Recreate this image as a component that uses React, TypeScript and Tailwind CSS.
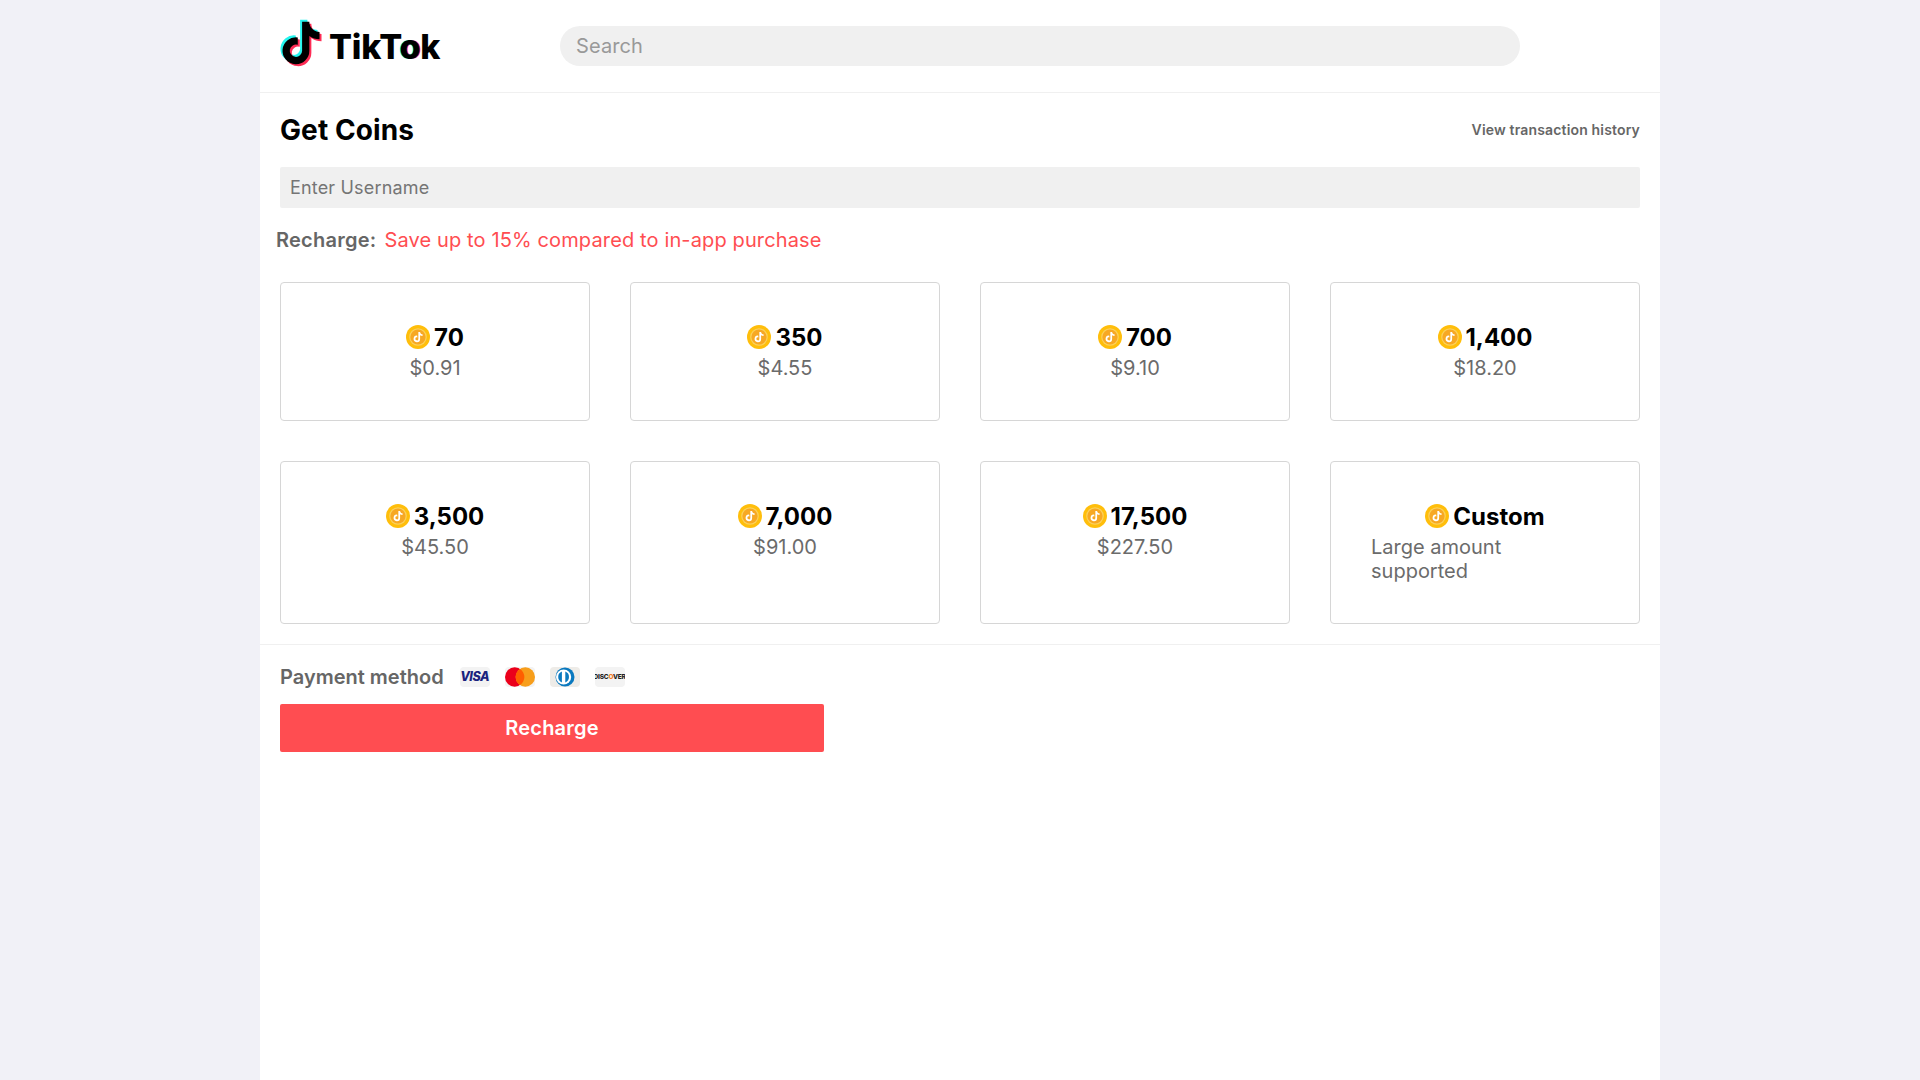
import React from 'react';

const NOTE =
  'M448,209.91a210.06,210.06,0,0,1-122.77-39.25V349.38A162.55,162.55,0,1,1,185,188.31V278.2a74.62,74.62,0,1,0,52.23,71.18V0l88,0a121.18,121.18,0,0,0,1.86,22.17h0A122.18,122.18,0,0,0,381,102.39a121.43,121.43,0,0,0,67,20.14Z';

const LogoMark = () => (
  <svg viewBox="-30 -30 508 572" className="w-[42px] h-[48px] shrink-0 -mt-[7px]">
    <path d={NOTE} fill="#25F4EE" transform="translate(-24 -24)" />
    <path d={NOTE} fill="#FE2C55" transform="translate(24 24)" />
    <path d={NOTE} fill="#000000" />
  </svg>
);

const Coin = () => (
  <svg viewBox="0 0 24 24" className="w-6 h-6 shrink-0 -mt-[2px]">
    <circle cx="12" cy="12" r="12" fill="#FFBE0B" />
    <circle cx="12" cy="12" r="8.8" fill="#FBD05A" />
    <circle cx="12" cy="12" r="7.6" fill="#F7A823" />
    <g transform="translate(7.6 6.9) scale(0.02)">
      <path d={NOTE} fill="#FFFFFF" />
    </g>
  </svg>
);

const VisaIcon = () => (
  <div className="w-[30px] h-5 rounded-sm bg-[#f3f3f3] flex items-center justify-center overflow-hidden">
    <span className="text-[12.5px] leading-none font-extrabold italic text-[#1a237e] tracking-[-0.5px]">VISA</span>
  </div>
);

const MastercardIcon = () => (
  <div className="w-[30px] h-5 rounded-sm bg-[#f3f3f3]">
    <svg viewBox="0 0 30 20" className="w-[30px] h-5">
      <circle cx="9.7" cy="10" r="9.7" fill="#EB001B" />
      <circle cx="20.3" cy="10" r="9.7" fill="#F79E1B" />
      <path d="M15 1.9a9.7 9.7 0 0 1 0 16.2a9.7 9.7 0 0 1 0-16.2Z" fill="#FF5F00" />
    </svg>
  </div>
);

const DinersIcon = () => (
  <div className="w-[30px] h-5 rounded-sm bg-[#eeece8]">
    <svg viewBox="0 0 30 20" className="w-[30px] h-5">
      <circle cx="15" cy="10" r="9.5" fill="#0A79BF" />
      <circle cx="13.6" cy="10" r="7.6" fill="#FFFFFF" />
      <path d="M11.9 4.6v10.8a5.8 5.8 0 0 1 0-10.8ZM15.3 4.6v10.8a5.8 5.8 0 0 0 0-10.8Z" fill="#0A79BF" />
    </svg>
  </div>
);

const DiscoverIcon = () => (
  <div className="w-[30px] h-5 rounded-sm bg-[#f3f3f3] flex items-center justify-center overflow-hidden">
    <span className="text-[6.5px] leading-none font-extrabold text-[#222] tracking-[-0.2px]">
      DISC<span className="text-[#F47B20]">O</span>VER
    </span>
  </div>
);

const CoinCard: React.FC<{ amount: string; price: string; left?: boolean }> = ({ amount, price, left }) => (
  <div className="border border-[#d6d6d6] rounded-[4px] px-10 pt-10 pb-10 cursor-pointer">
    <div className="flex items-center justify-center gap-1 h-[30px]">
      <Coin />
      <span className="text-2xl leading-[30px] font-bold text-black">{amount}</span>
    </div>
    <p className={`mt-[3px] text-xl leading-6 text-[#6b6b6b] ${left ? 'text-left' : 'text-center'}`}>{price}</p>
  </div>
);

const App: React.FC = () => {
  const packages = [
    { amount: '70', price: '$0.91' },
    { amount: '350', price: '$4.55' },
    { amount: '700', price: '$9.10' },
    { amount: '1,400', price: '$18.20' },
    { amount: '3,500', price: '$45.50' },
    { amount: '7,000', price: '$91.00' },
    { amount: '17,500', price: '$227.50' },
    { amount: 'Custom', price: 'Large amount supported', left: true },
  ];

  return (
    <div className="min-h-screen bg-[#f1f1f7] [font-family:Inter,sans-serif]">
      <div className="w-[1400px] min-h-screen mx-auto bg-white">
        {/* Header */}
        <header className="flex items-center h-[93px] px-5 border-b border-[#f0f0f0]">
          <div className="w-[280px] flex items-center gap-[7px]">
            <LogoMark />
            <span className="text-[34px] leading-none font-extrabold tracking-[-0.2px] text-black mt-[2px]">
              Tik<span>T</span>
              <span className="[text-shadow:-1px_0_0_#25F4EE,1px_0_0_#FE2C55]">o</span>k
            </span>
          </div>
          <input
            placeholder="Search"
            className="w-[960px] h-10 rounded-[20px] bg-[#f0f0f0] px-4 text-xl tracking-[0.1px] outline-none placeholder:text-[#999999]"
          />
        </header>

        {/* Get coins */}
        <section className="px-5 pt-5 pb-5 border-b border-[#f0f0f0]">
          <div className="flex items-center justify-between">
            <h1 className="text-[28px] leading-[34px] font-bold text-black tracking-[0.1px]">Get Coins</h1>
            <a className="text-sm font-semibold text-[#666666] tracking-[0.16px]">View transaction history</a>
          </div>
          <input
            placeholder="Enter Username"
            className="mt-5 block w-full h-[41px] rounded-[2px] bg-[#f0f0f0] px-[10px] text-lg tracking-[0.17px] outline-none placeholder:text-[#757575]"
          />
          <p className="mt-5 -ml-1 text-xl leading-6 tracking-[0.13px]">
            <span className="font-semibold text-[#666666] tracking-[0.25px]">Recharge:</span>
            <span className="ml-2 text-[#ff4d51]">Save up to 15% compared to in-app purchase</span>
          </p>
          <div className="mt-[30px] grid grid-cols-4 gap-10">
            {packages.map((item) => (
              <CoinCard key={item.amount} {...item} />
            ))}
          </div>
        </section>

        {/* Payment */}
        <section className="px-5 pt-5">
          <div className="flex items-center gap-4 h-6">
            <span className="text-xl font-semibold text-[#666666]">Payment method</span>
            <div className="flex items-center gap-[15px]">
              <VisaIcon />
              <MastercardIcon />
              <DinersIcon />
              <DiscoverIcon />
            </div>
          </div>
          <button className="mt-[15px] block w-[544px] h-12 rounded-[2px] bg-[#ff4d51] text-xl font-semibold tracking-[0.2px] text-white">
            Recharge
          </button>
        </section>
      </div>
    </div>
  );
};

export default App;
